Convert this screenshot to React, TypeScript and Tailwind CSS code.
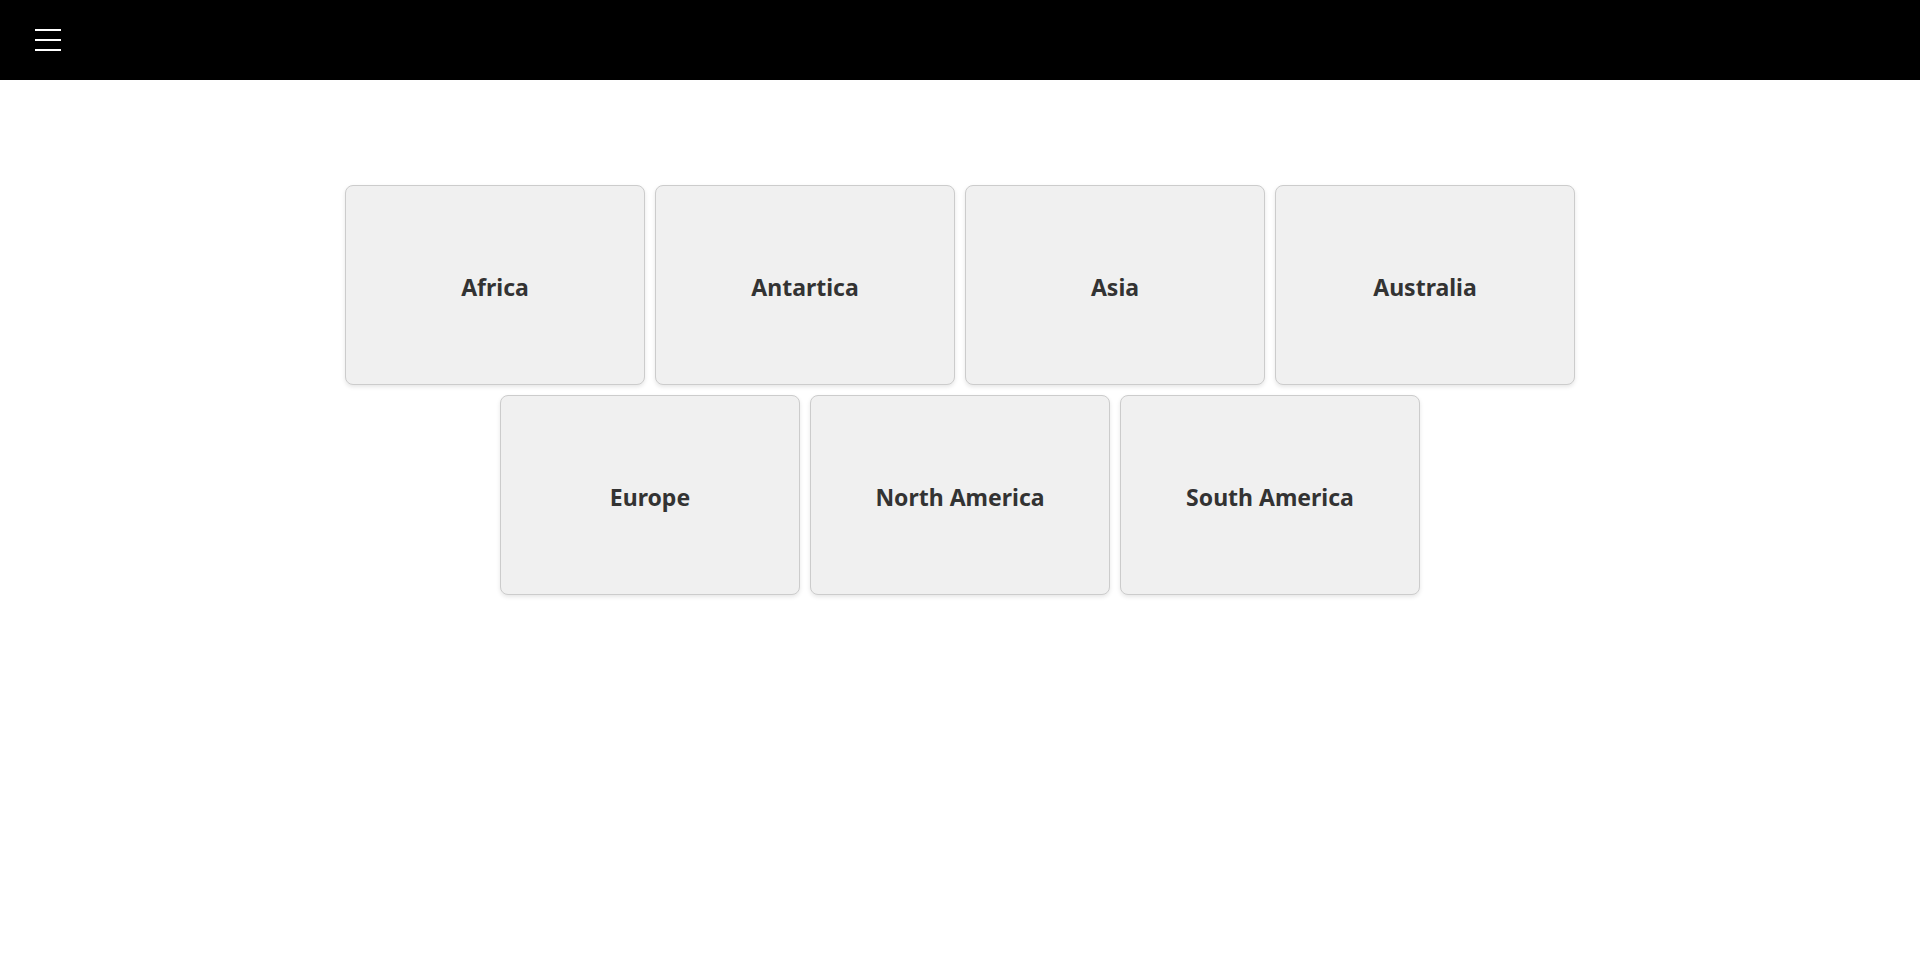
import React from "react";

const continents = ["Africa", "Antartica", "Asia", "Australia", "Europe", "North America", "South America"];

export default function App() {
  return (
    <div className="min-h-[961px] bg-white" style={{ fontFamily: '"Noto Sans", "Open Sans", sans-serif' }}>
      <header className="h-[80px] bg-black flex items-center px-[35px]">
        <button className="flex flex-col gap-[8px] w-[26px]" aria-label="menu">
          <span className="block h-[2px] w-[26px] bg-white" />
          <span className="block h-[2px] w-[26px] bg-white" />
          <span className="block h-[2px] w-[26px] bg-white" />
        </button>
      </header>
      <main className="pt-[105px]">
        <div className="max-w-[1240px] mx-auto flex flex-wrap justify-center gap-[10px]">
          {continents.map((c) => (
            <div
              key={c}
              className="w-[300px] h-[200px] bg-[#f0f0f0] border border-[#cccccc] rounded-[8px] shadow-[0_2px_4px_rgba(0,0,0,0.1)] flex items-center justify-center pt-[5px]"
            >
              <span className="text-[23px] font-bold text-[#333333]">{c}</span>
            </div>
          ))}
        </div>
      </main>
    </div>
  );
}
